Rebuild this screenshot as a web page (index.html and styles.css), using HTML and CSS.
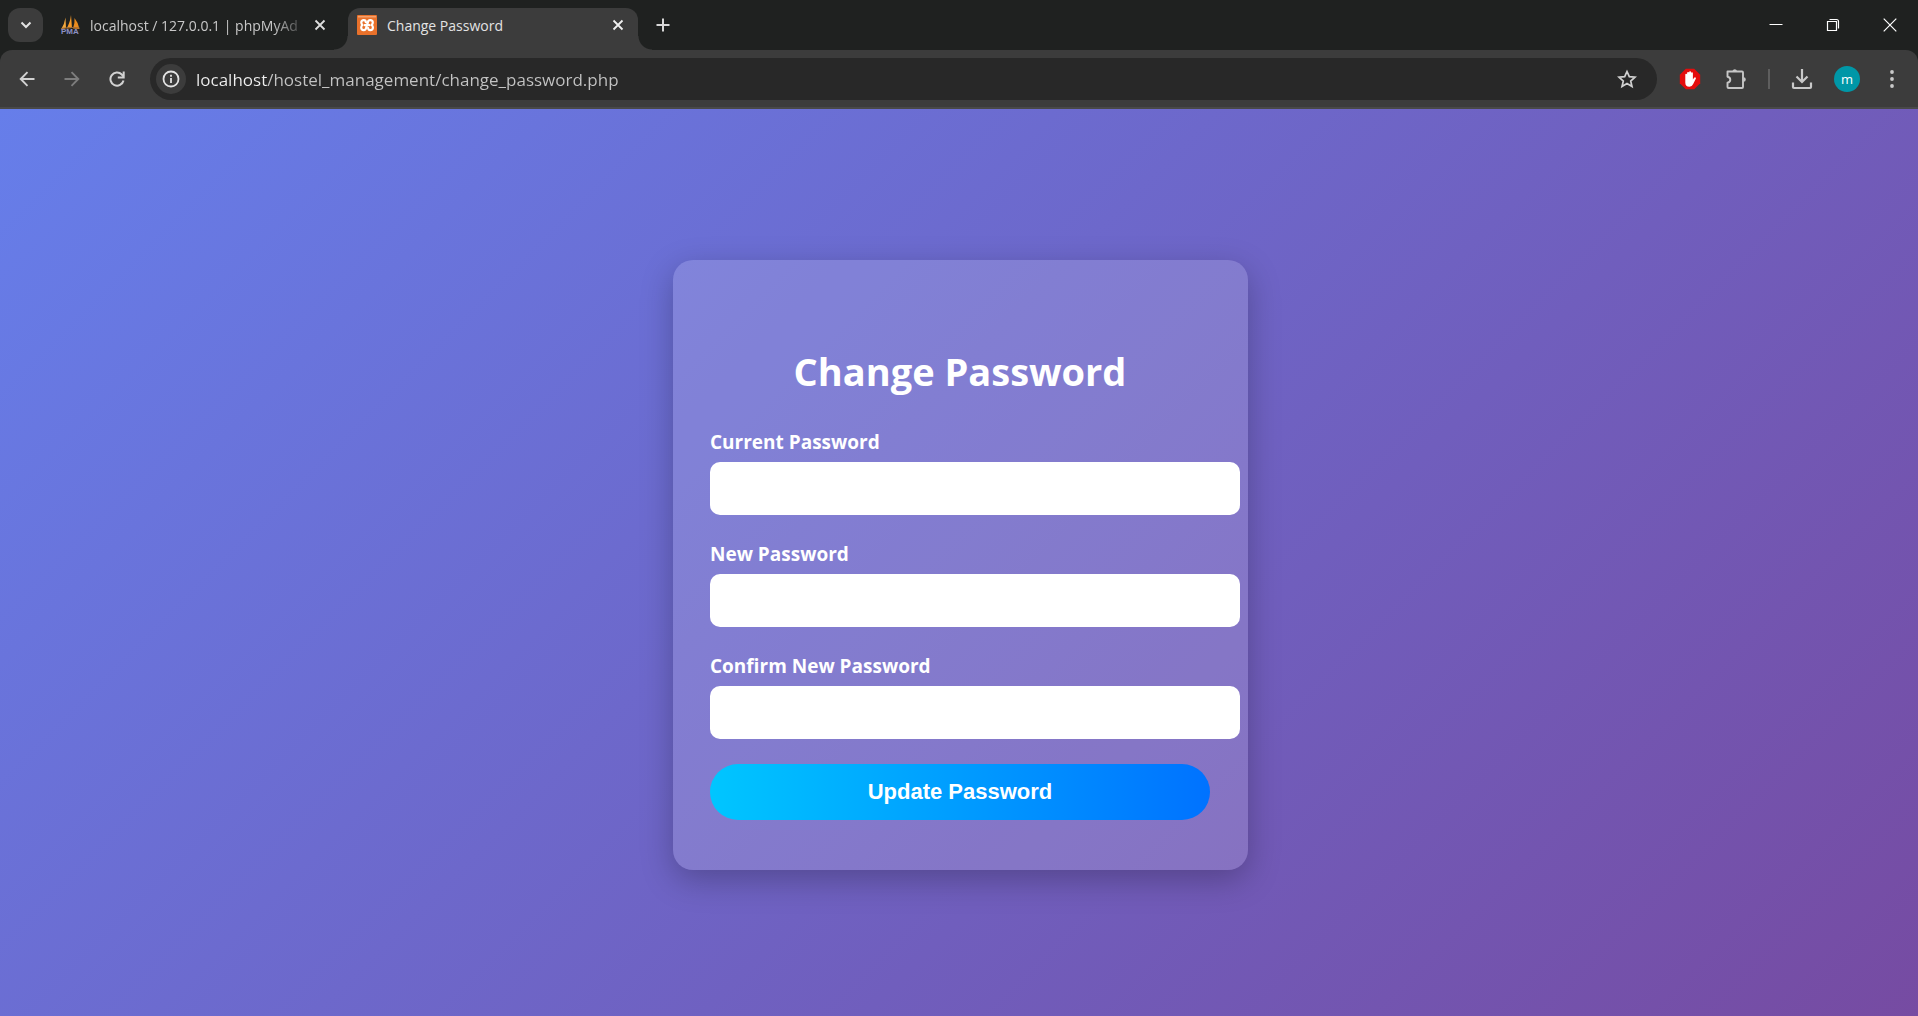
FILE: index.html
```html
<!DOCTYPE html>
<html lang="en">
<head>
<meta charset="utf-8">
<meta name="viewport" content="width=device-width, initial-scale=1">
<title>Change Password</title>
<link rel="stylesheet" href="styles.css">
</head>
<body>
<header class="browser">
  <div class="tab-strip">
    <button class="tab-search" type="button" aria-label="Search tabs">
      <svg width="12" height="8" viewBox="0 0 12 8"><path d="M1.5 1.5 6 6l4.500-4.500" fill="none" stroke="#e3e3e3" stroke-width="2"/></svg>
    </button>
    <div class="tab">
      <svg class="favicon" width="20" height="20" viewBox="0 0 20 20">
        <path d="M5.500 2.500 6 13 1 14.500Q4.500 9 5.500 2.500Z" fill="#f3a73c"/>
        <path d="M11 0 12 13 6.500 13.500Q10 8 11 0Z" fill="#f89c2a"/>
        <path d="M14.500 3Q18.500 8 19.500 14L13 13.500Q15 8 14.500 3Z" fill="#e98b1e"/>
        <path d="M1 13.500Q10 11.500 19.500 13" stroke="#9a6a3c" fill="none"/>
        <text x="1" y="19" class="favicon-text">PMA</text>
      </svg>
      <span class="tab-title tab-title-faded">localhost / 127.0.0.1 | phpMyAd</span>
      <button class="tab-close" type="button" aria-label="Close tab">
        <svg width="12" height="12" viewBox="0 0 12 12"><path d="m1.500 1.500 9 9m0-9-9 9" stroke="#dedede" stroke-width="1.800"/></svg>
      </button>
    </div>
    <div class="tab tab-active">
      <svg class="favicon" width="20" height="20" viewBox="0 0 20 20">
        <rect width="20" height="20" rx="1" fill="#e9712b"/>
        <path d="M1 1h18v1.500H1z" fill="#f4a06c"/>
        <path d="M8.800 7.200Q8.800 5.200 6.800 5.200 4.300 5.200 4.300 7.600 4.300 9 5.400 10 4.200 11 4.200 12.600 4.200 15.200 6.800 15.200 8.800 15.200 9.200 12.700L10.800 7.700Q11 5.200 13.200 5.200 15.800 5.200 15.800 7.600 15.800 9 14.700 10 15.900 11 15.900 12.600 15.900 15.200 13.300 15.200 11.300 15.200 11.200 13.200M7.800 10.200h4.600" fill="none" stroke="#fff" stroke-width="2.200" stroke-linecap="round" stroke-linejoin="round"/>
      </svg>
      <span class="tab-title">Change Password</span>
      <button class="tab-close" type="button" aria-label="Close tab">
        <svg width="12" height="12" viewBox="0 0 12 12"><path d="m1.500 1.500 9 9m0-9-9 9" stroke="#f0f0f0" stroke-width="1.800"/></svg>
      </button>
    </div>
    <button class="new-tab" type="button" aria-label="New tab">
      <svg width="14" height="14" viewBox="0 0 14 14"><path d="M7 .5v13M.5 7h13" stroke="#d8d8d8" stroke-width="2"/></svg>
    </button>
    <div class="window-controls">
      <button type="button" aria-label="Minimize"><svg width="14" height="14" viewBox="0 0 14 14"><path d="M.5 6.500h13" stroke="#fff"/></svg></button>
      <button type="button" aria-label="Restore"><svg width="14" height="14" viewBox="0 0 14 14"><path d="M1.500 3.500h9v9h-9z" fill="#1f2120" stroke="#fff" stroke-width="1.200"/><path d="M3.500 1.500h7q2 0 2 2v7" fill="none" stroke="#fff" stroke-width="1.200"/></svg></button>
      <button type="button" aria-label="Close"><svg width="14" height="14" viewBox="0 0 14 14"><path d="m.7.7 12.600 12.600m0-12.600L.7 13.300" stroke="#fff" stroke-width="1.200"/></svg></button>
    </div>
  </div>
  <div class="toolbar">
    <div class="nav-buttons">
      <button type="button" aria-label="Back"><svg width="16" height="16" viewBox="0 0 16 16"><path d="M15.500 8H2M8.500 1.200 1.700 8l6.800 6.800" fill="none" stroke="#d2d2d2" stroke-width="1.900"/></svg></button>
      <button type="button" aria-label="Forward" disabled><svg width="16" height="16" viewBox="0 0 16 16"><path d="M.5 8H14M7.500 1.200 14.300 8l-6.800 6.800" fill="none" stroke="#7d7d7d" stroke-width="1.900"/></svg></button>
      <button type="button" aria-label="Reload"><svg width="16" height="16" viewBox="0 0 16 16"><path d="M14.500 9.500A6.600 6.600 0 1 1 12.800 3.500L14.500 5.500" fill="none" stroke="#d2d2d2" stroke-width="2"/><path d="M14.700.5v6H8.800" fill="none" stroke="#d2d2d2" stroke-width="2"/></svg></button>
    </div>
    <div class="omnibox">
      <button class="site-info" type="button" aria-label="View site information"><svg width="18" height="18" viewBox="0 0 18 18"><circle cx="9" cy="9" r="7.500" fill="none" stroke="#e3e3e3" stroke-width="1.800"/><path d="M9 8v5M9 4.800v2" stroke="#e3e3e3" stroke-width="1.800"/></svg></button>
      <input class="address" type="text" aria-label="Address" value="localhost/hostel_management/change_password.php">
      <button class="bookmark" type="button" aria-label="Bookmark this tab"><svg width="20" height="20" viewBox="0 0 20 20"><path d="m10 2.500 2.300 5.200 5.700.5-4.300 3.800 1.300 5.600-5-3-5 3L6.300 12 2 8.200l5.700-.5Z" fill="none" stroke="#d0d0d0" stroke-width="1.700"/></svg></button>
    </div>
    <div class="actions">
      <button class="adblock" type="button" aria-label="AdBlock"><svg width="22" height="22" viewBox="0 0 22 22"><path d="M6.800.8h8.400l6 6v8.400l-6 6H6.800l-6-6V6.800Z" fill="#e40d0d"/><path d="M6.300 9.500V6.600q0-.9.900-.9t.9.900V5q0-1 1-1t1 1V4.300q0-1 1-1t1 1V5.200q0-.9.900-.9t.9.900v6.300l1.200-1.700q.7-.8 1.400-.4t.3 1.300L14.200 16q-1.200 2.800-3.800 2.800-4.100 0-4.100-4.300Z" fill="#fff"/></svg></button>
      <button type="button" aria-label="Extensions"><svg width="22" height="22" viewBox="0 0 22 22"><path d="M2.500 3.500H17q1 0 1 1V19q0 1-1 1H3.500q-1 0-1-1v-4.200q2.800-.6 2.800-3t-2.800-3Z" fill="none" stroke="#c6c6c6" stroke-width="1.900" stroke-linejoin="round"/><path d="M7.500 3a2.300 2.300 0 0 1 4.500 0ZM18.500 9.200v4.600a2.300 2.300 0 0 0 0-4.600Z" fill="#c6c6c6"/></svg></button>
      <span class="divider"></span>
      <button type="button" aria-label="Downloads"><svg width="22" height="22" viewBox="0 0 22 22"><path d="M11 1v12M5.500 8.500l5.500 5.500 5.500-5.500M2 14.500V19q0 1 1 1h16q1 0 1-1v-4.500" fill="none" stroke="#c9c9c9" stroke-width="2.200"/></svg></button>
      <button class="avatar" type="button">m</button>
      <button type="button" aria-label="Menu"><svg width="22" height="22" viewBox="0 0 22 22"><g fill="#c9c9c9"><circle cx="11" cy="4" r="1.900"/><circle cx="11" cy="11" r="1.900"/><circle cx="11" cy="18" r="1.900"/></g></svg></button>
    </div>
  </div>
</header>
<main class="page">
  <form class="card">
    <h1 class="card-title">Change Password</h1>
    <div class="field">
      <label for="current">Current Password</label>
      <input id="current" type="password">
    </div>
    <div class="field">
      <label for="new">New Password</label>
      <input id="new" type="password">
    </div>
    <div class="field">
      <label for="confirm">Confirm New Password</label>
      <input id="confirm" type="password">
    </div>
    <button class="submit" type="submit">Update Password</button>
  </form>
</main>
</body>
</html>
```
FILE: styles.css
```css
* {
  box-sizing: border-box;
}

body {
  margin: 0;
  min-height: 100vh;
  display: flex;
  flex-direction: column;
  font-family: "Open Sans", "Noto Sans", sans-serif;
}

button {
  border: 0;
  padding: 0;
  background: none;
  display: flex;
  align-items: center;
  justify-content: center;
  font-family: inherit;
}

svg {
  display: block;
  flex: none;
}

.browser {
  background: #1f2120;
}

.tab-strip {
  height: 50px;
  display: flex;
  align-items: center;
  padding-left: 8px;
}

.tab-search {
  width: 35px;
  height: 34px;
  border-radius: 12px;
  background: #3c3c3c;
  margin-right: 5px;
}

.tab {
  position: relative;
  align-self: flex-end;
  width: 300px;
  height: 42px;
  display: flex;
  align-items: center;
  gap: 10px;
  padding: 0 22px 8px 12px;
  color: #c8c8c8;
}

.tab-active {
  width: 290px;
  padding: 0 14px 8px 9px;
  border-radius: 12px 12px 0 0;
  background: #3c3c3c;
  color: #e3e3e3;
}

/* Curved feet that join the active tab to the toolbar */
.tab-active::before,
.tab-active::after {
  content: "";
  position: absolute;
  bottom: 0;
  width: 14px;
  height: 14px;
}

.tab-active::before {
  right: 100%;
  background: radial-gradient(circle at 0 0, transparent 13px, #3c3c3c 14px);
}

.tab-active::after {
  left: 100%;
  background: radial-gradient(circle at 100% 0, transparent 13px, #3c3c3c 14px);
}

.favicon {
  overflow: visible;
}

.favicon-text {
  font: bold 8px "Liberation Sans", sans-serif;
  fill: #8c90c4;
}

.tab-title {
  flex: 1;
  min-width: 0;
  overflow: hidden;
  white-space: nowrap;
  font-size: 14px;
  line-height: 20px;
  padding-top: 2px;
}

.tab-title-faded {
  mask-image: linear-gradient(to right, #000 88%, transparent 105%);
}

.tab-close {
  width: 12px;
  height: 20px;
  margin-left: 6px;
}

.new-tab {
  width: 34px;
  height: 34px;
  margin-left: 8px;
}

.window-controls {
  margin-left: auto;
  display: flex;
}

.window-controls button {
  width: 57px;
  height: 48px;
}

.toolbar {
  height: 59px;
  display: flex;
  align-items: center;
  padding: 1px 10px 0 12px;
  background: #3c3c3c;
  border-bottom: 2px solid #494949;
  border-radius: 12px 12px 0 0;
}

.nav-buttons {
  display: flex;
  gap: 15px;
}

.nav-buttons button {
  width: 30px;
  height: 30px;
}

.omnibox {
  flex: 1;
  height: 42px;
  display: flex;
  align-items: center;
  margin-left: 18px;
  padding: 0 20px 0 6px;
  border-radius: 21px;
  background: #282828;
}

.site-info {
  width: 30px;
  height: 30px;
  border-radius: 50%;
  background: #3c3c3c;
}

.address {
  flex: 1;
  min-width: 0;
  height: 30px;
  margin-left: 10px;
  padding: 0;
  border: 0;
  outline: 0;
  font-family: inherit;
  font-size: 17px;
  /* The host is brighter than the path */
  color: transparent;
  background: linear-gradient(to right, #f0f0f0 72px, #c4c4c4 72px);
  background-clip: text;
}

.actions {
  display: flex;
  align-items: center;
  margin-left: 22px;
}

.actions button {
  width: 22px;
  height: 26px;
  margin-right: 21px;
}

.actions .adblock {
  margin-right: 24px;
}

.actions button:last-child {
  margin-right: 5px;
}

.divider {
  width: 2px;
  height: 20px;
  margin-right: 21px;
  background: #5e5e5e;
}

.actions .avatar {
  width: 26px;
  border-radius: 50%;
  background: #0097a7;
  color: #fff;
  font-size: 13px;
  line-height: 20px;
}

.page {
  flex: 1;
  display: flex;
  align-items: center;
  justify-content: center;
  padding: 24px 20px 20px 23px;
  background: linear-gradient(135deg, #667eea, #764ba2);
}

.card {
  width: 100%;
  max-width: 575px;
  padding: 84px 38px 50px 37px;
  border-radius: 20px;
  background: rgba(255, 255, 255, 0.15);
  box-shadow: 0 10px 32px rgba(0, 0, 0, 0.25);
  color: #fff;
}

.card-title {
  margin: 0 0 30px;
  font-size: 38px;
  line-height: 54px;
  text-align: center;
}

.field {
  display: flex;
  flex-direction: column;
  gap: 6px;
  /* Boxes reach past the button's right edge */
  margin: 0 -30px 25px 0;
}

.field label {
  font-size: 19px;
  font-weight: 700;
  line-height: 28px;
}

.field input {
  height: 53px;
  padding: 0 15px;
  border: 0;
  border-radius: 10px;
  background: #fff;
  font-size: 20px;
}

.submit {
  width: 100%;
  height: 56px;
  border-radius: 32px;
  background: linear-gradient(to right, #00c6ff, #0072ff);
  color: #fff;
  font-family: "Liberation Sans", Arial, sans-serif;
  font-size: 22px;
  font-weight: 700;
}
```
